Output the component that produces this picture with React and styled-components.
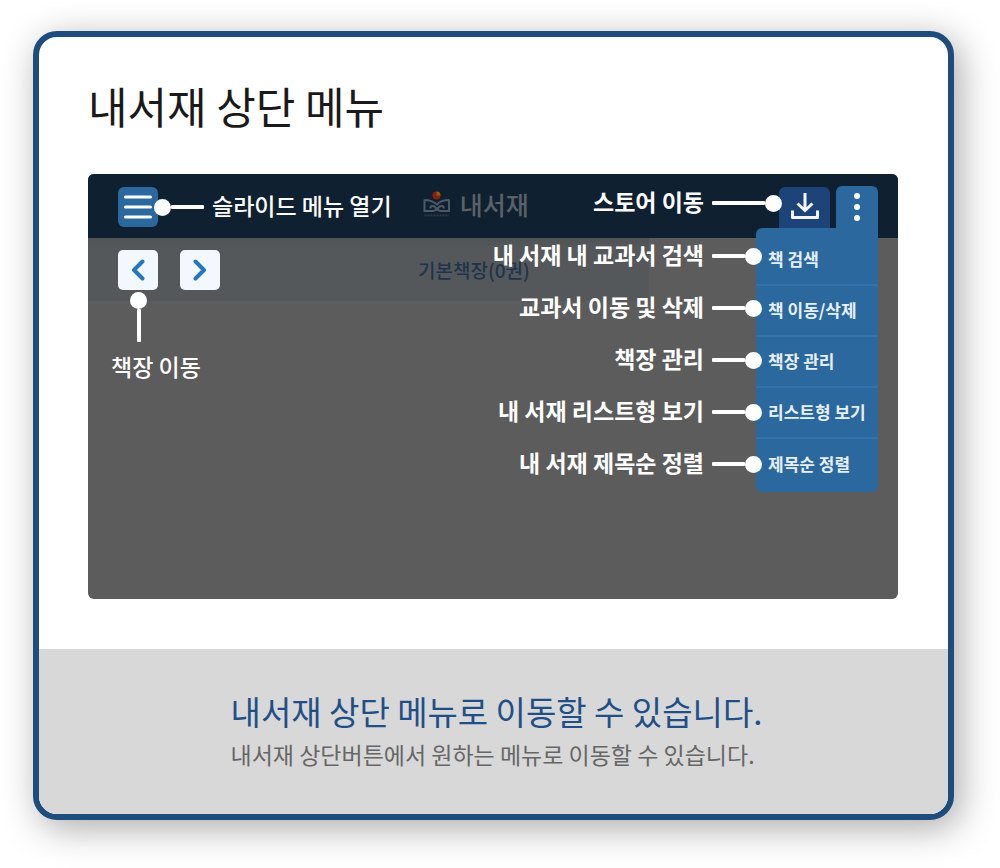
import React from "react";
import styled, { createGlobalStyle } from "styled-components";

const GlobalStyle = createGlobalStyle`
  * { box-sizing: border-box; }
  body {
    margin: 0;
    background: #fff;
    font-family: "Noto Sans CJK KR", "Noto Sans", sans-serif;
  }
  ul { margin: 0; padding: 0; list-style: none; }
  button { margin: 0; padding: 0; border: 0; font: inherit; color: inherit; cursor: pointer; }
`;

const Page = styled.div`
  padding: 31px 46px 48px 33px;
`;

const Card = styled.article`
  overflow: hidden;
  border: 6px solid #1e4d7d;
  border-radius: 24px;
  background: #fff;
  box-shadow: 6px 8px 36px rgba(0, 0, 0, 0.34);
`;

const CardMain = styled.div`
  padding: 38px 50px 50px 49px;
`;

const Title = styled.h1`
  margin: 0 0 39px;
  font-size: 43px;
  line-height: 60px;
  font-weight: 400;
  color: #1a1a1a;
`;

const Screen = styled.section`
  overflow: hidden;
  min-height: 425px;
  border-radius: 6px;
  background: #5c5c5c;
  color: #fff;
`;

const TopBar = styled.header`
  display: flex;
  align-items: flex-start;
  height: 64px;
  padding: 12px 20px 0 30px;
  background: #0f2031;
`;

const MenuButton = styled.button`
  display: grid;
  place-items: center;
  width: 40px;
  height: 40px;
  margin-top: 1px;
  border-radius: 6px;
  background: #2b689e;
`;

const Callout = styled.div`
  position: relative;
  display: flex;
  flex-direction: ${(p) => (p.$reverse ? "row-reverse" : "row")};
  align-items: center;
  gap: 8px;
  height: ${(p) => p.$height || 32}px;
  margin: ${(p) => p.$margin || "0"};
`;

const Label = styled.span`
  padding-bottom: 4px;
  font-size: 23px;
  line-height: 32px;
  font-weight: ${(p) => (p.$bold ? 700 : 500)};
  white-space: nowrap;
  color: #fff;
`;

const Pin = styled.span`
  display: flex;
  flex: none;
  flex-direction: ${(p) => p.$direction || "row"};
  align-items: center;

  &::before {
    content: "";
    width: 17px;
    height: 17px;
    border-radius: 50%;
    background: #fff;
  }

  &::after {
    content: "";
    width: ${(p) => (p.$direction === "column" ? 4 : p.$length)}px;
    height: ${(p) => (p.$direction === "column" ? p.$length : 4)}px;
    border-radius: 1px;
    background: #fff;
  }
`;

const PinLeft = styled(Pin).attrs({ $direction: "row-reverse" })``;

const Brand = styled.div`
  display: flex;
  align-items: center;
  gap: 9px;
  height: 36px;
  margin: 0 auto 0 31px;
  font-size: 25px;
  line-height: 36px;
  font-weight: 500;
  white-space: nowrap;
  color: #5b6167;
`;

const StoreButton = styled.button`
  display: grid;
  place-items: center;
  width: 51px;
  height: 42px;
  margin: 1px 6px 0 0;
  padding-bottom: 4px;
  border-radius: 6px 6px 0 0;
  background: #1c4478;
`;

const MoreButton = styled.button`
  display: grid;
  place-items: center;
  width: 42px;
  height: 42px;
  border-radius: 6px 6px 0 0;
  background: #2b689e;
`;

const Body = styled.div`
  display: grid;
  grid-template-columns: minmax(0, 1fr);

  > * { grid-area: 1 / 1; }
`;

const Shelf = styled.div`
  min-width: 0;
`;

const ShelfBar = styled.div`
  display: flex;
  align-items: center;
  gap: 22px;
  width: calc(100% - 249px);
  height: 63px;
  padding-left: 30px;
  background: linear-gradient(#505356, #54585b 10px);
`;

const ArrowButton = styled.button`
  display: grid;
  place-items: center;
  width: 40px;
  height: 40px;
  border-radius: 5px;
  background: #f3f8ff;
`;

const ShelfName = styled.span`
  margin: 0 auto 0 176px;
  font-size: 19px;
  line-height: 28px;
  font-weight: 500;
  white-space: nowrap;
  color: #1f344b;
`;

const ShelfGuide = styled.div`
  position: relative;
  display: flex;
  flex-direction: column;
  align-items: flex-start;
  gap: 8px;
  margin: -9px 0 0 23px;

  > ${Pin} { margin-left: 19px; }
`;

const Overlay = styled.div`
  display: flex;
  justify-content: flex-end;
  align-items: flex-start;
  justify-self: end;
  padding-right: 20px;
  margin-top: -10px;
`;

const Guides = styled.ul`
  position: relative;
  z-index: 1;
  padding-top: 2px;
  margin-right: -6px;
`;

const MenuList = styled.ul`
  position: relative;
  width: 122px;
  padding: 7px 0 2px;
  border-radius: 6px 0 6px 6px;
  background: #2b689e;
`;

const MenuRow = styled.li`
  height: 51px;
  border-bottom: 2px solid #3273a9;

  &:last-child { border-bottom: 0; }
`;

const MenuItem = styled.button`
  width: 100%;
  height: 100%;
  padding: 0 0 2px 12px;
  background: none;
  text-align: left;
  font-size: 17px;
  line-height: 24px;
  font-weight: 700;
  white-space: nowrap;
  color: #e6eff7;
`;

const CardFooter = styled.footer`
  display: flex;
  justify-content: center;
  padding: 38px 0 40px 6px;
  min-height: 165px;
  background: #d8d8d8;
`;

const Summary = styled.h2`
  margin: 0;
  font-size: 33px;
  line-height: 48px;
  font-weight: 400;
  color: #1f4f87;
`;

const Detail = styled.p`
  margin: 0;
  font-size: 23px;
  line-height: 38px;
  font-weight: 400;
  color: #666;
`;

const HamburgerIcon = () => (
  <svg width="28" height="24" viewBox="0 0 28 24" stroke="#fff" strokeWidth="3" strokeLinecap="round">
    <path d="M1.5 2H26.5M1.5 12H26.5M1.5 22H26.5" />
  </svg>
);

const DownloadIcon = () => (
  <svg width="28" height="28" viewBox="0 0 28 28" fill="none" stroke="#f2f6fb" strokeWidth="3">
    <path d="M14 1V18M6.5 11.5L14 18.5L21.500 11.5" />
    <path d="M1.500 18.500V25.500H26.500V18.500" strokeLinejoin="round" />
  </svg>
);

const MoreIcon = () => (
  <svg width="8" height="30" viewBox="0 0 8 30" fill="#fff">
    <circle cx="4" cy="4" r="3" />
    <circle cx="4" cy="15" r="3" />
    <circle cx="4" cy="26" r="3" />
  </svg>
);

const Chevron = ({ right }) => (
  <svg width="14" height="22" viewBox="0 0 14 22" fill="none" stroke="#2577bd" strokeWidth="4" strokeLinecap="round" strokeLinejoin="round">
    <path d={right ? "M2.500 2.500L11 11L2.500 19.500" : "M11.500 2.500L3 11L11.500 19.500"} />
  </svg>
);

const BrandIcon = () => (
  <svg width="28" height="28" viewBox="0 0 28 28" fill="none" stroke="#4d5a66">
    <circle cx="13.500" cy="5.500" r="4" fill="#86200c" stroke="none" />
    <path d="M13.500 1.500a4 4 0 0 1 4 4l-4 0z" fill="#8f5a14" stroke="none" />
    <path
      d="M1.500 9.500V21H10C13 21 14 19 16 17C18 15 21 16 20.500 18.500M26 9.500V21H18C15 21 13.500 19 12 17C10 15 7 16 7.500 18.500M1.500 10C6 10 10 11 14 14.500C17 11 21 10 26 10"
      strokeWidth="2"
    />
    <path d="M1.500 25.500H26" strokeWidth="2" strokeDasharray="2 1" opacity="0.5" />
  </svg>
);

const menu = [
  { item: "책 검색", guide: "내 서재 내 교과서 검색" },
  { item: "책 이동/삭제", guide: "교과서 이동 및 삭제" },
  { item: "책장 관리", guide: "책장 관리" },
  { item: "리스트형 보기", guide: "내 서재 리스트형 보기" },
  { item: "제목순 정렬", guide: "내 서재 제목순 정렬" },
];

export default function App() {
  return (
    <>
      <GlobalStyle />
      <Page>
        <Card>
          <CardMain>
            <Title>내서재 상단 메뉴</Title>
            <Screen>
              <TopBar>
                <MenuButton aria-label="메뉴"><HamburgerIcon /></MenuButton>
                <Callout $height={42} $margin="0 0 0 -4px">
                  <Pin $length={33} />
                  <Label>슬라이드 메뉴 열기</Label>
                </Callout>
                <Brand><BrandIcon />내서재</Brand>
                <Callout $reverse $height={34} $margin="0 -3px 0 0">
                  <PinLeft $length={53} />
                  <Label $bold>스토어 이동</Label>
                </Callout>
                <StoreButton aria-label="스토어"><DownloadIcon /></StoreButton>
                <MoreButton aria-label="더보기"><MoreIcon /></MoreButton>
              </TopBar>
              <Body>
                <Shelf>
                  <ShelfBar>
                    <ArrowButton aria-label="이전 책장"><Chevron /></ArrowButton>
                    <ArrowButton aria-label="다음 책장"><Chevron right /></ArrowButton>
                    <ShelfName>기본책장(0권)</ShelfName>
                  </ShelfBar>
                  <ShelfGuide>
                    <Pin $direction="column" $length={33} />
                    <Label>책장 이동</Label>
                  </ShelfGuide>
                </Shelf>
                <Overlay>
                  <Guides>
                    {menu.map((m) => (
                      <Callout as="li" $reverse $height={52} key={m.item}>
                        <PinLeft $length={33} />
                        <Label $bold>{m.guide}</Label>
                      </Callout>
                    ))}
                  </Guides>
                  <MenuList>
                    {menu.map((m) => (
                      <MenuRow key={m.item}><MenuItem>{m.item}</MenuItem></MenuRow>
                    ))}
                  </MenuList>
                </Overlay>
              </Body>
            </Screen>
          </CardMain>
          <CardFooter>
            <div>
              <Summary>내서재 상단 메뉴로 이동할 수 있습니다.</Summary>
              <Detail>내서재 상단버튼에서 원하는 메뉴로 이동할 수 있습니다.</Detail>
            </div>
          </CardFooter>
        </Card>
      </Page>
    </>
  );
}
